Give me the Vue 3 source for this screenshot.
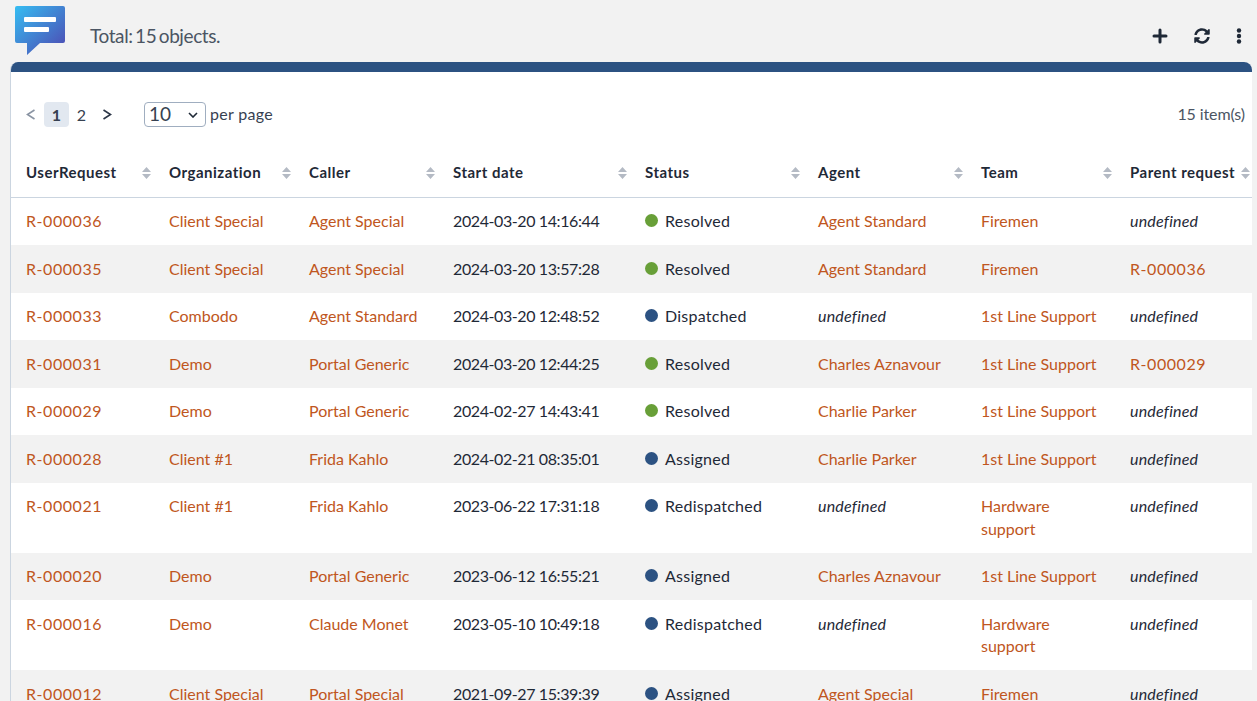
<template>
  <div class="page">
    <header class="topbar">
      <div class="title">
        <svg class="logo" width="52" height="50" viewBox="0 0 52 50">
          <defs>
            <linearGradient id="logoGrad" x1="0" y1="0" x2="1" y2="1">
              <stop offset="0" stop-color="#35bdf2" />
              <stop offset="1" stop-color="#4f45b0" />
            </linearGradient>
          </defs>
          <path d="M2 0H48a2 2 0 0 1 2 2V35a2 2 0 0 1-2 2H25L12 49V37H2a2 2 0 0 1-2-2V2A2 2 0 0 1 2 0Z" fill="url(#logoGrad)" />
          <rect x="9" y="11" width="32" height="5" rx="1" fill="#fff" />
          <rect x="9" y="21" width="25" height="5" rx="1" fill="#fff" />
        </svg>
        <span class="total">Total: 15 objects.</span>
      </div>
      <div class="actions">
        <svg width="16" height="16" viewBox="0 0 16 16"><path d="M8 2v12M2 8h12" stroke="#1f2937" stroke-width="3" stroke-linecap="round" /></svg>
        <svg width="16" height="16" viewBox="0 0 512 512"><path fill="#1f2937" d="M370.7 133.3C339.5 104 298.9 88 255.8 88c-77.5.1-144.3 53.2-162.8 126.9-1.3 5.4-6.1 9.2-11.7 9.2H24.1c-7.5 0-13.2-6.8-11.8-14.2C33.9 94.9 134.8 8 256 8c66.4 0 126.8 26.1 171.3 68.7L463 41C478.1 25.9 504 36.6 504 57.9V192c0 13.3-10.7 24-24 24H345.9c-21.4 0-32.1-25.9-17-41l41.8-41.7zM32 296h134.1c21.4 0 32.1 25.9 17 41l-41.8 41.8c31.3 29.3 71.8 45.3 114.9 45.2 77.4-.1 144.3-53.1 162.8-126.8 1.3-5.4 6.1-9.2 11.7-9.2h57.3c7.5 0 13.2 6.8 11.8 14.2C478.1 417.1 377.2 504 256 504c-66.4 0-126.8-26.1-171.3-68.7L49 471C33.9 486.1 8 475.4 8 454.1V320c0-13.3 10.7-24 24-24z" /></svg>
        <svg width="6" height="16" viewBox="0 0 6 16"><circle cx="3" cy="2.5" r="2.2" fill="#1f2937" /><circle cx="3" cy="8" r="2.2" fill="#1f2937" /><circle cx="3" cy="13.5" r="2.2" fill="#1f2937" /></svg>
      </div>
    </header>

    <section class="card">
      <div class="card-band"></div>
      <div class="toolbar">
        <div class="pager">
          <span class="arrow prev">
            <svg width="10" height="11" viewBox="0 0 10 11"><path d="M8.5 1 1.5 5.5 8.5 10" fill="none" stroke="#8a94a3" stroke-width="1.6" /></svg>
          </span>
          <span class="num current">1</span>
          <span class="num">2</span>
          <span class="arrow next">
            <svg width="10" height="11" viewBox="0 0 10 11"><path d="M1.5 1 8.5 5.5 1.5 10" fill="none" stroke="#2d3748" stroke-width="1.6" /></svg>
          </span>
          <div class="select">
            <span>10</span>
            <svg width="10" height="6" viewBox="0 0 10 6"><path d="M1 1l4 4 4-4" fill="none" stroke="#1f2937" stroke-width="1.6" /></svg>
          </div>
          <span class="per">per page</span>
        </div>
        <span class="count">15 item(s)</span>
      </div>

      <table>
        <colgroup>
          <col v-for="w in widths" :key="w.name" :style="{ width: w.size + 'px' }" />
        </colgroup>
        <thead>
          <tr>
            <th v-for="w in widths" :key="w.name">
              <div class="th-inner">
                <span>{{ w.name }}</span>
                <svg width="9" height="12" viewBox="0 0 9 12"><path d="M4.5 0 9 5H0zM4.5 12 0 7h9z" fill="#b4bac4" /></svg>
              </div>
            </th>
          </tr>
        </thead>
        <tbody>
          <tr v-for="r in rows" :key="r.id">
            <td><a class="ref">{{ r.id }}</a></td>
            <td><a>{{ r.org }}</a></td>
            <td><a>{{ r.caller }}</a></td>
            <td class="date">{{ r.date }}</td>
            <td class="status"><span class="dot" :class="r.status === 'Resolved' ? 'green' : 'blue'"></span>{{ r.status }}</td>
            <td><a v-if="r.agent">{{ r.agent }}</a><em v-else>undefined</em></td>
            <td><a>{{ r.team }}</a></td>
            <td><a v-if="r.parent" class="ref">{{ r.parent }}</a><em v-else>undefined</em></td>
          </tr>
        </tbody>
      </table>
    </section>
  </div>
</template>

<script setup>
const widths = [
  { name: 'UserRequest', size: 143 },
  { name: 'Organization', size: 140 },
  { name: 'Caller', size: 144 },
  { name: 'Start date', size: 192 },
  { name: 'Status', size: 173 },
  { name: 'Agent', size: 163 },
  { name: 'Team', size: 149 },
  { name: 'Parent request', size: 137 }
]

const rows = [
  { id: 'R-000036', org: 'Client Special', caller: 'Agent Special', date: '2024-03-20 14:16:44', status: 'Resolved', agent: 'Agent Standard', team: 'Firemen' },
  { id: 'R-000035', org: 'Client Special', caller: 'Agent Special', date: '2024-03-20 13:57:28', status: 'Resolved', agent: 'Agent Standard', team: 'Firemen', parent: 'R-000036' },
  { id: 'R-000033', org: 'Combodo', caller: 'Agent Standard', date: '2024-03-20 12:48:52', status: 'Dispatched', team: '1st Line Support' },
  { id: 'R-000031', org: 'Demo', caller: 'Portal Generic', date: '2024-03-20 12:44:25', status: 'Resolved', agent: 'Charles Aznavour', team: '1st Line Support', parent: 'R-000029' },
  { id: 'R-000029', org: 'Demo', caller: 'Portal Generic', date: '2024-02-27 14:43:41', status: 'Resolved', agent: 'Charlie Parker', team: '1st Line Support' },
  { id: 'R-000028', org: 'Client #1', caller: 'Frida Kahlo', date: '2024-02-21 08:35:01', status: 'Assigned', agent: 'Charlie Parker', team: '1st Line Support' },
  { id: 'R-000021', org: 'Client #1', caller: 'Frida Kahlo', date: '2023-06-22 17:31:18', status: 'Redispatched', team: 'Hardware support' },
  { id: 'R-000020', org: 'Demo', caller: 'Portal Generic', date: '2023-06-12 16:55:21', status: 'Assigned', agent: 'Charles Aznavour', team: '1st Line Support' },
  { id: 'R-000016', org: 'Demo', caller: 'Claude Monet', date: '2023-05-10 10:49:18', status: 'Redispatched', team: 'Hardware support' },
  { id: 'R-000012', org: 'Client Special', caller: 'Portal Special', date: '2021-09-27 15:39:39', status: 'Assigned', agent: 'Agent Special', team: 'Firemen' }
]
</script>

<style>
html, body {
  margin: 0;
  height: 100%;
  overflow: hidden;
  background: #f2f2f2;
}
</style>

<style scoped>
.page {
  height: 701px;
  overflow: hidden;
  box-sizing: border-box;
  padding: 0 5px 0 10px;
  font-family: Lato, "Open Sans", sans-serif;
  font-size: 16px;
  line-height: 22.5px;
  color: #1f2937;
}

.topbar {
  height: 62px;
  display: flex;
  justify-content: space-between;
}

.title {
  display: flex;
  align-items: flex-start;
}

.logo {
  margin: 6px 0 0 5px;
}

.total {
  margin: 24px 0 0 23px;
  font-size: 19px;
  line-height: 24px;
  letter-spacing: -0.4px;
  word-spacing: -2px;
  color: #4b5563;
}

.actions {
  display: flex;
  align-items: center;
  gap: 26px;
  height: 32px;
  margin-top: 20px;
  padding-right: 10px;
}

.card {
  background: #fff;
  border-left: 1px solid #cbd5e0;
  height: 640px;
  border-radius: 8px 8px 0 0;
  overflow: hidden;
}

.card-band {
  height: 10px;
  background: #2c5282;
}

.toolbar {
  height: 77.5px;
  box-sizing: border-box;
  padding: 30px 7px 0 14px;
  display: flex;
  justify-content: space-between;
  align-items: flex-start;
}

.pager {
  display: flex;
  align-items: center;
  height: 25px;
}

.arrow {
  display: flex;
  width: 19px;
}

.arrow.prev {
  padding-left: 1px;
  width: 18px;
}

.arrow.next {
  margin-left: 3px;
  padding-left: 5px;
  width: 14px;
}

.num {
  width: 25px;
  height: 25px;
  line-height: 25px;
  text-align: center;
  border-radius: 4px;
  color: #374151;
}

.num.current {
  background: #e2e8f0;
  font-weight: 700;
}

.select {
  margin-left: 28px;
  width: 62px;
  height: 25px;
  box-sizing: border-box;
  border: 1px solid #a0aec0;
  border-radius: 4px;
  background: #fff;
  display: flex;
  align-items: center;
  justify-content: space-between;
  padding: 0 7px 0 4px;
  font-size: 19px;
  color: #374151;
}

.per {
  margin-left: 4px;
  letter-spacing: 0.3px;
  color: #374151;
}

.count {
  color: #4b5563;
  line-height: 23px;
  letter-spacing: -0.1px;
}

table {
  border-collapse: collapse;
  table-layout: fixed;
  width: 1241px;
}

th {
  height: 47px;
  padding: 0 3px 0 15px;
  border-bottom: 1px solid #cbd5e0;
  text-align: left;
  font-size: 15px;
  font-weight: 700;
  letter-spacing: 0.5px;
  color: #1f2937;
}

.th-inner {
  display: flex;
  justify-content: space-between;
  align-items: center;
  margin-top: -1px;
}

th:last-child {
  padding-right: 2px;
}

td {
  padding: 12.5px 15px;
  vertical-align: top;
  color: #1f2937;
}

tbody tr:nth-child(even) td {
  background: #f2f2f2;
}

a {
  color: #c05621;
}

a.ref {
  letter-spacing: 0.55px;
}

.date {
  letter-spacing: -0.4px;
}

.status {
  letter-spacing: 0.25px;
}

em {
  font-style: italic;
  letter-spacing: 0.2px;
}

.dot {
  display: inline-block;
  width: 13px;
  height: 13px;
  border-radius: 50%;
  margin-right: 7px;
  vertical-align: 0;
}

.green {
  background: #689f38;
}

.blue {
  background: #2c5282;
}
</style>
